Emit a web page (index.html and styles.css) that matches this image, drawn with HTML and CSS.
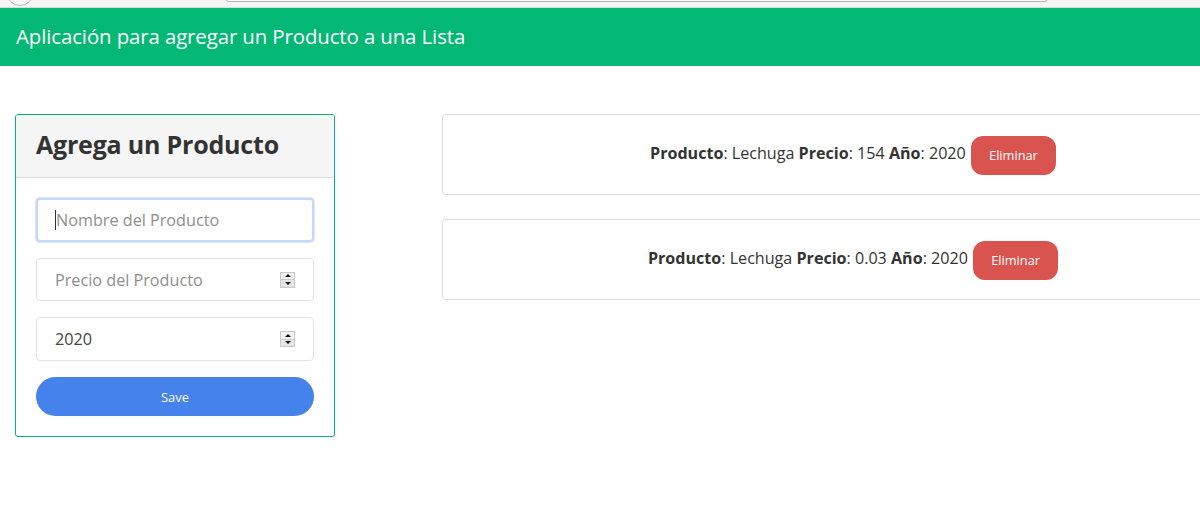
FILE: index.html
```html
<!DOCTYPE html>
<html lang="es">
<head>
<meta charset="utf-8">
<title>Productos</title>
<link rel="stylesheet" href="styles.css">
</head>
<body>
<div class="chrome">
  <span class="chrome-circle"></span>
  <span class="chrome-bar"></span>
</div>
<nav class="navbar">Aplicación para agregar un Producto a una Lista</nav>
<main class="layout">
  <section class="form-card">
    <header class="form-head"><h1>Agrega un Producto</h1></header>
    <form class="form-body">
      <div class="field focus"><span class="caret"></span><input type="text" placeholder="Nombre del Producto"></div>
      <div class="field"><input type="text" placeholder="Precio del Producto"><span class="spin"><i class="up"></i><i class="down"></i></span></div>
      <div class="field tall"><input type="text" value="2020"><span class="spin"><i class="up"></i><i class="down"></i></span></div>
      <button type="button" class="save">Save</button>
    </form>
  </section>
  <section class="list">
    <div class="item"><p><b>Producto</b>: Lechuga <b>Precio</b>: 154 <b>Año</b>: 2020 <button type="button" class="del">Eliminar</button></p></div>
    <div class="item"><p><b>Producto</b>: Lechuga <b>Precio</b>: 0.03 <b>Año</b>: 2020 <button type="button" class="del">Eliminar</button></p></div>
  </section>
</main>
</body>
</html>
```
FILE: styles.css
```css
* { box-sizing: border-box; }
html, body { margin: 0; padding: 0; overflow: hidden; }
body {
  width: 1200px;
  height: 525px;
  background: #fff;
  font-family: "Open Sans", "Noto Sans", sans-serif;
  color: #333;
}
.chrome {
  height: 8px;
  background: #f6f6f6;
  border-bottom: 1px solid #dcdcdc;
  position: relative;
  overflow: hidden;
}
.chrome-circle {
  position: absolute;
  left: 6px;
  top: -22px;
  width: 28px;
  height: 28px;
  border: 1px solid #b8b8b8;
  border-radius: 50%;
}
.chrome-bar {
  position: absolute;
  left: 226px;
  top: -10px;
  width: 821px;
  height: 12px;
  border: 1px solid #b4b4b4;
  background: #fff;
  border-radius: 2px;
}
.navbar {
  height: 58px;
  background: #03b874;
  color: #fff;
  font-size: 20.4px;
  padding: 0 16px 2px;
  display: flex;
  align-items: center;
  letter-spacing: -0.1px;
}
.layout {
  display: flex;
  align-items: flex-start;
  padding: 48px 0 0 15px;
  gap: 107px;
}
.form-card {
  width: 320px;
  flex: none;
  border: 1px solid #03b874;
  border-radius: 3px;
  overflow: hidden;
}
.form-head {
  background: #f5f5f5;
  border-bottom: 1px solid #dcdcdc;
  height: 63px;
  display: flex;
  align-items: center;
  padding: 0 20px 4px;
}
.form-head h1 {
  margin: 0;
  font-size: 25px;
  font-weight: 700;
  color: #333;
  letter-spacing: -0.2px;
}
.form-body {
  padding: 20px 20px 20px 20px;
  display: flex;
  flex-direction: column;
  gap: 16px;
}
.field {
  height: 43px;
  border: 1px solid #e3e3e3;
  border-radius: 4px;
  display: flex;
  align-items: center;
  padding: 0 18px;
  background: #fff;
}
.field.tall { height: 44px; }
.field.focus {
  height: 44px;
  border: 2px solid #c6d8f7;
  box-shadow: 0 0 0 1px #dbe6fa;
  padding-left: 17px;
}
.caret {
  width: 1px;
  height: 20px;
  background: #333;
  flex: none;
}
.field input {
  flex: 1;
  min-width: 0;
  border: 0;
  outline: 0;
  padding: 0;
  font: inherit;
  font-size: 16.2px;
  color: #444;
  background: transparent;
}
.field input::placeholder { color: #8e8e8e; }
.spin {
  flex: none;
  width: 15px;
  height: 16px;
  display: flex;
  flex-direction: column;
  background: #e6e6e6;
  border: 1px solid #c8c8c8;
  margin-left: 6px;
}
.spin i {
  flex: 1;
  display: flex;
  align-items: center;
  justify-content: center;
}
.spin .up { border-bottom: 1px solid #c8c8c8; background: #f2f2f2; }
.spin .up::before {
  content: "";
  border: 3px solid transparent;
  border-bottom: 3px solid #111;
  border-top: 0;
}
.spin .down::before {
  content: "";
  border: 3px solid transparent;
  border-top: 3px solid #111;
  border-bottom: 0;
}
.save {
  height: 39px;
  border: 0;
  border-radius: 20px;
  background: #4582ec;
  color: #fff;
  font: inherit;
  font-size: 13px;
  cursor: pointer;
}
.list {
  width: 822px;
  flex: none;
  display: flex;
  flex-direction: column;
  gap: 24px;
}
.item {
  height: 81px;
  border: 1px solid #dddddd;
  border-radius: 4px;
  display: flex;
  align-items: center;
  justify-content: center;
  padding-bottom: 3px;
}
.item p {
  margin: 0;
  font-size: 16.1px;
  color: #333;
  display: flex;
  align-items: center;
  white-space: pre;
}
.item b { font-weight: 700; }
.del {
  height: 39px;
  width: 85px;
  margin-left: 1px;
  border: 0;
  border-radius: 12px;
  background: #d9534f;
  color: #fff;
  font: inherit;
  font-size: 12.8px;
  position: relative;
  top: 2px;
}
```
